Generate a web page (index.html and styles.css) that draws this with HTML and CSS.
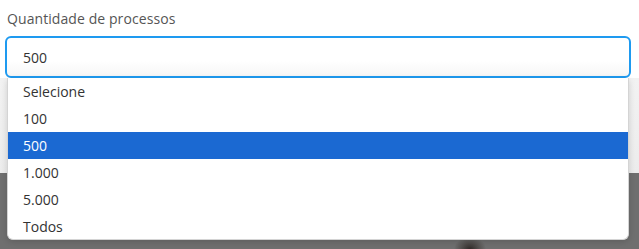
FILE: index.html
```html
<!DOCTYPE html>
<html lang="pt-BR">
<head>
<meta charset="utf-8">
<title>Quantidade de processos</title>
<link rel="stylesheet" href="styles.css">
</head>
<body>
  <div class="sheet">
    <label class="label">Quantidade de processos</label>
    <div class="field">
      <div class="input">500</div>
      <ul class="menu">
        <li class="option">Selecione</li>
        <li class="option">100</li>
        <li class="option selected">500</li>
        <li class="option">1.000</li>
        <li class="option">5.000</li>
        <li class="option">Todos</li>
      </ul>
    </div>
  </div>
  <div class="backdrop"></div>
</body>
</html>
```
FILE: styles.css
```css
html, body {
  margin: 0;
  padding: 0;
}
body {
  width: 639px;
  height: 249px;
  overflow: hidden;
  font-family: "Open Sans", "Noto Sans", sans-serif;
  font-size: 14px;
  background: #ffffff;
}
.sheet {
  height: 173px;
  box-sizing: border-box;
  padding-top: 9px;
  background: linear-gradient(#ffffff 0, #ffffff 78px, #f2f2f2 78px, #ececec 173px);
}
.label {
  display: block;
  padding-left: 7px;
  line-height: 19px;
  color: #555555;
  letter-spacing: 0.08px;
}
.field {
  position: relative;
  margin: 8px 0 0 5px;
  width: 626px;
}
.input {
  box-sizing: border-box;
  height: 42px;
  border: 2px solid #1e9af0;
  border-radius: 6px;
  padding: 1px 0 0 16px;
  display: flex;
  align-items: center;
  color: #333333;
  background: linear-gradient(#ffffff 60%, #f6f6f6);
}
.menu {
  position: absolute;
  top: 42px;
  left: 2px;
  width: 622px;
  box-sizing: border-box;
  margin: 0;
  padding: 0;
  list-style: none;
  background: #ffffff;
  border: 1px solid #d4d4d4;
  border-top: none;
  border-radius: 0 0 6px 6px;
  box-shadow: 0 2px 6px rgba(0, 0, 0, 0.15);
  overflow: hidden;
  z-index: 2;
}
.option {
  height: 27px;
  line-height: 27px;
  padding-left: 15px;
  color: #333333;
}
.option:last-child {
  height: 26px;
}
.option.selected {
  background: #1b69d2;
  color: #ffffff;
}
.backdrop {
  height: 76px;
  background:
    radial-gradient(ellipse 16px 12px at 470px 100%, #2f2a28 0, rgba(60, 55, 52, 0.6) 50%, rgba(110, 110, 110, 0) 100%),
    #6f6f6f;
}
```
